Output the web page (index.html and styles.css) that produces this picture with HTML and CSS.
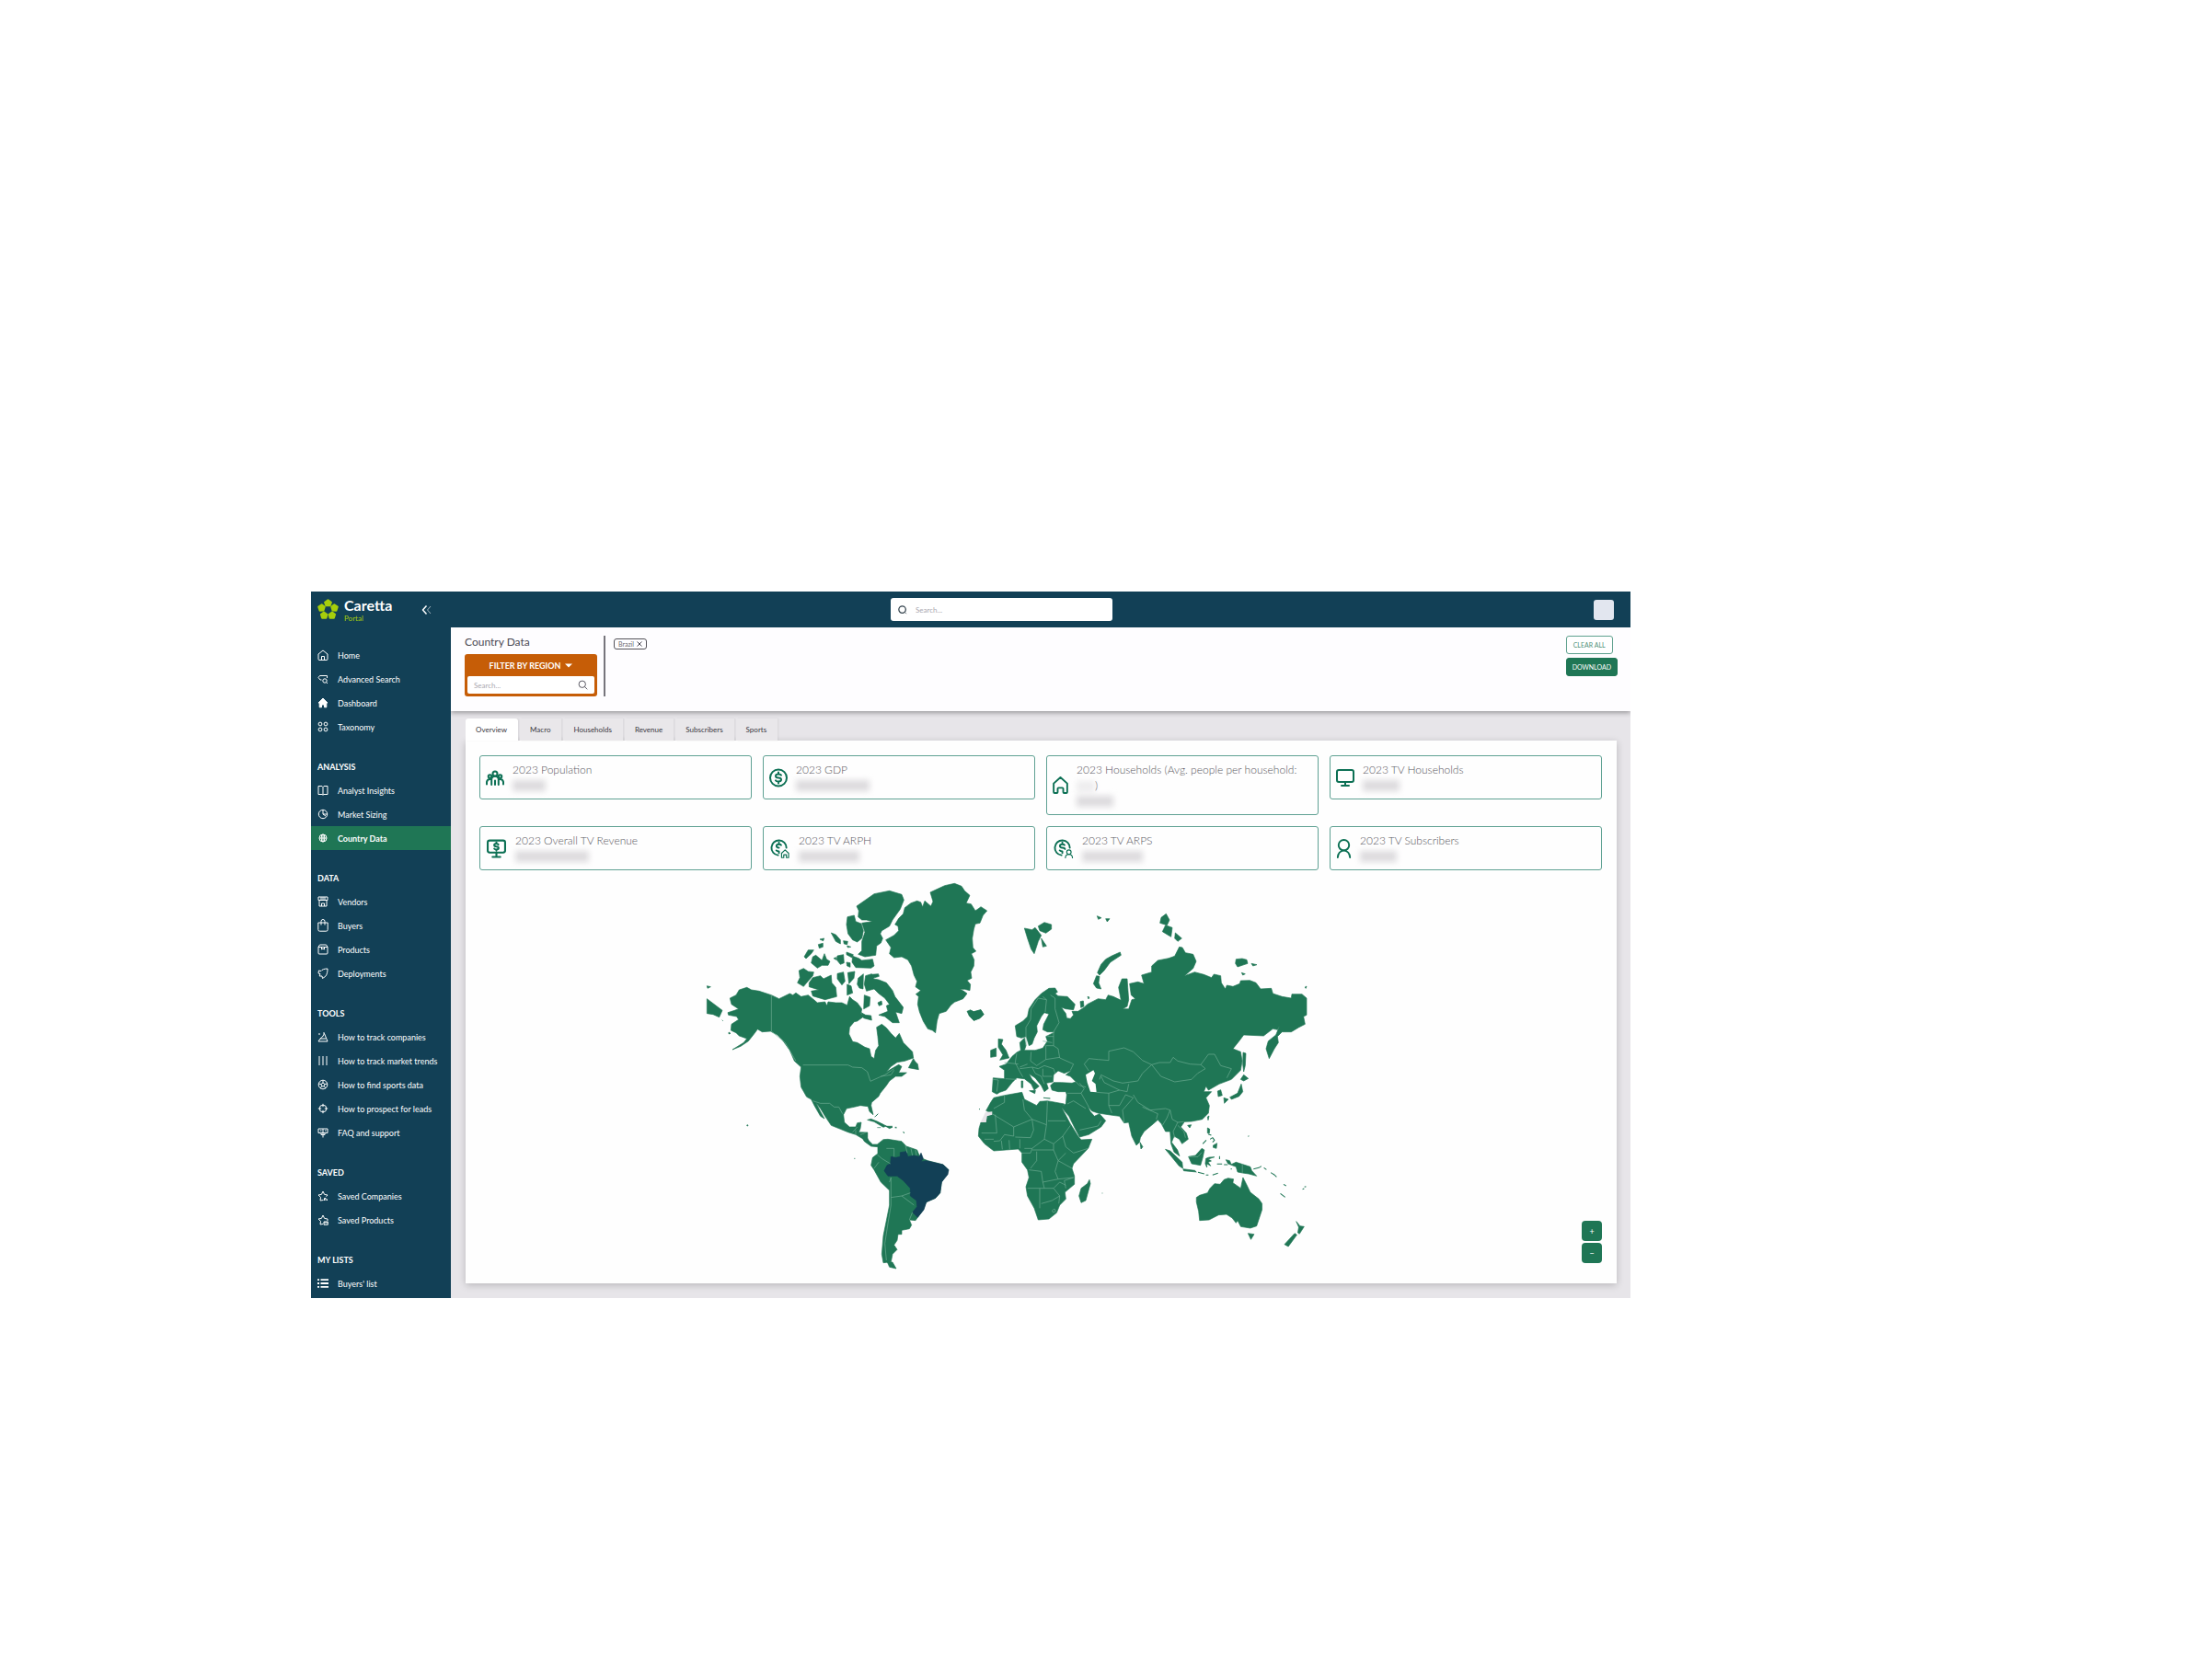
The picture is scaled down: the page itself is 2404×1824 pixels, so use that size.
FILE: index.html
```html
<!DOCTYPE html>
<html lang="en">
<head>
<meta charset="utf-8">
<title>Caretta Portal - Country Data</title>
<link rel="stylesheet" href="styles.css">
</head>
<body>
<svg class="sprite" aria-hidden="true">
  <symbol id="home" viewBox="0 0 12 12"><path d="M1 5 6 1l5 4v5.500a1 1 0 0 1-1 1H2a1 1 0 0 1-1-1zM4.500 11V7.500h3V11"/></symbol>
  <symbol id="adv" viewBox="0 0 12 12"><path d="M10.500 5V2.500h-8L1 4.500l2 2.500h1.500M11 11 9.600 9.600"/><circle cx="8" cy="8" r="2.200"/></symbol>
  <symbol id="dash" viewBox="0 0 12 12"><path fill="currentColor" d="m6 1 5 5H9.800v4.800H7.500V8h-3v2.800H2.200V6H1z"/></symbol>
  <symbol id="tax" viewBox="0 0 12 12"><circle cx="3" cy="3" r="1.900"/><circle cx="9" cy="3" r="1.900"/><circle cx="3" cy="9" r="1.900"/><circle cx="9" cy="9" r="1.900"/></symbol>
  <symbol id="book" viewBox="0 0 12 12"><path d="M1 1.500h4l1 1 1-1h4v9H7l-1 .7-1-.7H1zM6 2.500V11"/></symbol>
  <symbol id="pie" viewBox="0 0 12 12"><circle cx="6" cy="6" r="4.700"/><path d="M6 1.500V6h4.500M6 6l3 2"/></symbol>
  <symbol id="globe" viewBox="0 0 12 12"><circle cx="6" cy="6" r="4"/><ellipse cx="6" cy="6" rx="1.800" ry="4"/><path d="M2 6h8M6 2v8"/></symbol>
  <symbol id="shop" viewBox="0 0 12 12"><path d="M1 1h10v3.500H1zM2 5v6h8V5M4 1v3M8 1v3M6 1v3M4.500 11V8h3v3"/></symbol>
  <symbol id="bag" viewBox="0 0 12 14"><path d="M.8 4h10.400v7.500q0 1.700-1.700 1.700h-7q-1.700 0-1.700-1.700zM4 6.500v-4a2 2 0 0 1 4 0v4"/></symbol>
  <symbol id="box" viewBox="0 0 12 12"><path d="M1 3.500 2.500 1h7L11 3.500v6.500a1 1 0 0 1-1 1H2a1 1 0 0 1-1-1zM1 3.500h10M4.500 3.500V6L6 5.200 7.500 6V3.500"/></symbol>
  <symbol id="rocket" viewBox="0 0 12 12"><path d="M11 1C7 1 5 2 4 3.500L1.500 3 1 6l2 .5-.8 2.500L5 9l.5 2.500L8.500 9.500C10.500 7.500 11 4 11 1z"/></symbol>
  <symbol id="compass" viewBox="0 0 12 12"><path d="M1 11h10L7.500 2.500 5.500 6 3 8zM3 8h6M1 3h2M6 2h2"/></symbol>
  <symbol id="sliders" viewBox="0 0 12 12"><path d="M2 1v5M2 8v3M6 1v2M6 5v6M10 1v5M10 8v3M1 7h2M5 4h2M9 7h2"/></symbol>
  <symbol id="ball" viewBox="0 0 12 12"><circle cx="6" cy="6" r="4.800"/><path d="m6 4 2 1.500-.8 2.300H4.800L4 5.500zM6 4V1.500M8 5.500 10.500 5M7.200 7.800 9 10M4.800 7.800 3 10M4 5.500 1.500 5"/></symbol>
  <symbol id="target" viewBox="0 0 12 12"><circle cx="6" cy="6" r="3.800"/><path d="M6 .8v3.400M6 7.800v3.400M.8 6h3.400M7.800 6h3.400"/></symbol>
  <symbol id="sign" viewBox="0 0 12 12"><path d="M1 2h10v4.500H1zM6 2v9.500M4 7v1.500h4V7M3 4h1.500M8 4h1.500"/></symbol>
  <symbol id="starA" viewBox="0 0 12 12"><path d="M6.500 10.500 3 11l.5-3.500L1 5l3.400-.6L6 1l1.600 3.400L11 5 9.500 6.700M7.500 11V8.500h1.500V11M10.500 11V9.500"/></symbol>
  <symbol id="starB" viewBox="0 0 12 12"><path d="M6 10.500 3 11l.5-3.500L1 5l3.400-.6L6 1l1.600 3.400L11 5v2M7 8h4.300v3.300H7zM7 9h4"/></symbol>
  <symbol id="list" viewBox="0 0 12 12"><path stroke-width="1.800" d="M0 2.200h2M3.500 2.200H12M0 6h2M3.500 6H12M0 9.800h2M3.500 9.800H12"/></symbol>
  <symbol id="glass" viewBox="0 0 12 12"><circle cx="5.200" cy="5.200" r="4"/><path d="m8.200 8.200 3 3"/></symbol>
  <symbol id="ring" viewBox="0 0 12 12"><circle cx="5.500" cy="5.500" r="4.500"/><path stroke-width=".8" d="m9.500 9.500 1.500 1.500"/></symbol>
  <symbol id="people" viewBox="0 0 20 20"><circle cx="10" cy="5.500" r="2.500"/><circle cx="4.500" cy="8.500" r="1.800"/><circle cx="15.500" cy="8.500" r="1.800"/><path d="M6.200 17.500V12a3.800 3.800 0 0 1 7.600 0v5.500M1 17v-2.500q.5-3 3.500-3M19 17v-2.500q-.5-3-3.500-3M10 13v4.500"/></symbol>
  <symbol id="dollar" viewBox="0 0 20 20"><circle cx="10" cy="10" r="9"/><path d="M13 7.200Q12.500 6 10 6q-3 0-3 2t3 2 3 2-3 2q-2.500 0-3-1.200M10 4v2M10 14v2"/></symbol>
  <symbol id="house" viewBox="0 0 18 20"><path d="m9 1 7.800 7v10q0 1-1 1h-2.600q-1 0-1-1v-4q0-1-1-1H6.800q-1 0-1 1v4q0 1-1 1H2.200q-1 0-1-1V8z"/></symbol>
  <symbol id="tv" viewBox="0 0 20 20"><rect x="1" y="1.500" width="18" height="13" rx="2"/><path d="M10 14.500v4M6 18.500h8"/></symbol>
  <symbol id="tvmoney" viewBox="0 0 20 20"><rect x="1" y="1.500" width="18" height="12.500" rx="2"/><path d="M10 14v4.500M6 18.500h8M12 5.800q-.5-1-2-1-2.200 0-2.200 1.500T10 7.800t2.200 1.500T10 11q-1.500 0-2.200-1M10 3.500v1.200M10 11v1"/></symbol>
  <symbol id="moneyhouse" viewBox="0 0 22 22"><path d="M9 18.500a8.500 8.500 0 1 1 9.500-8.500M12.500 7q-.5-1-2.500-1-2.800 0-2.800 1.900T10 10M10 4v2M7 13q1 1 3 1v2"/><path stroke-width="1.200" d="m17 12.500 4 3.700v5h-2.500V18h-3v3.200H13v-5z"/></symbol>
  <symbol id="moneyuser" viewBox="0 0 22 22"><path d="M9 18.500a8.500 8.500 0 1 1 9.500-8.500M12.500 7q-.5-1-2.500-1-2.800 0-2.800 1.900T10 10t3 1.500M10 4v2M7 13q1 1 3 1v2"/><g stroke-width="1.200"><circle cx="17.500" cy="15" r="2.500"/><path d="M13.500 21.500q0-4 4-4t4 4"/></g></symbol>
  <symbol id="user" viewBox="0 0 17 22"><ellipse cx="8.500" cy="7" rx="6" ry="6"/><path d="M1.500 21q.5-7 7-8 6.500 1 7 8"/></symbol>
  <symbol id="chev" viewBox="0 0 12 12"><path stroke-width="1.500" d="M5.500 1.500 1.500 6l4 4.500"/><path opacity=".6" d="M10 2 6.500 6l3.500 4"/></symbol>
</svg>

<div class="app">
  <header class="topbar">
    <div class="brand">
      <svg class="logo" viewBox="0 0 22 22" aria-hidden="true">
        <g fill="#a6ce0b" stroke="#a6ce0b" stroke-width="2" stroke-linejoin="round">
          <path id="petal" d="m11 1.200 3.200 2.400L13 7H9L7.800 3.600z"/>
          <use href="#petal" transform="rotate(72 11 11.500)"/>
          <use href="#petal" transform="rotate(144 11 11.500)"/>
          <use href="#petal" transform="rotate(216 11 11.500)"/>
          <use href="#petal" transform="rotate(288 11 11.500)"/>
        </g>
      </svg>
      <div class="brand-text"><span class="brand-name">Caretta</span><span class="brand-sub">Portal</span></div>
      <button class="collapse" type="button" aria-label="Collapse menu"><svg class="icon"><use href="#chev"/></svg></button>
    </div>
    <label class="search"><svg class="icon"><use href="#ring"/></svg><input type="text" placeholder="Search..." aria-label="Search"></label>
    <button class="avatar" type="button" aria-label="Account"></button>
  </header>

  <nav class="sidebar">
    <ul>
      <li><a href="#"><svg class="icon"><use href="#home"/></svg>Home</a></li>
      <li><a href="#"><svg class="icon"><use href="#adv"/></svg>Advanced Search</a></li>
      <li><a href="#"><svg class="icon"><use href="#dash"/></svg>Dashboard</a></li>
      <li><a href="#"><svg class="icon"><use href="#tax"/></svg>Taxonomy</a></li>
    </ul>
    <h2>ANALYSIS</h2>
    <ul>
      <li><a href="#"><svg class="icon"><use href="#book"/></svg>Analyst Insights</a></li>
      <li><a href="#"><svg class="icon"><use href="#pie"/></svg>Market Sizing</a></li>
      <li><a href="#" class="active"><svg class="icon"><use href="#globe"/></svg>Country Data</a></li>
    </ul>
    <h2>DATA</h2>
    <ul>
      <li><a href="#"><svg class="icon"><use href="#shop"/></svg>Vendors</a></li>
      <li><a href="#"><svg class="icon tall"><use href="#bag"/></svg>Buyers</a></li>
      <li><a href="#"><svg class="icon"><use href="#box"/></svg>Products</a></li>
      <li><a href="#"><svg class="icon"><use href="#rocket"/></svg>Deployments</a></li>
    </ul>
    <h2>TOOLS</h2>
    <ul>
      <li><a href="#"><svg class="icon"><use href="#compass"/></svg>How to track companies</a></li>
      <li><a href="#"><svg class="icon"><use href="#sliders"/></svg>How to track market trends</a></li>
      <li><a href="#"><svg class="icon"><use href="#ball"/></svg>How to find sports data</a></li>
      <li><a href="#"><svg class="icon"><use href="#target"/></svg>How to prospect for leads</a></li>
      <li><a href="#"><svg class="icon"><use href="#sign"/></svg>FAQ and support</a></li>
    </ul>
    <h2>SAVED</h2>
    <ul>
      <li><a href="#"><svg class="icon"><use href="#starA"/></svg>Saved Companies</a></li>
      <li><a href="#"><svg class="icon"><use href="#starB"/></svg>Saved Products</a></li>
    </ul>
    <h2>MY LISTS</h2>
    <ul>
      <li><a href="#"><svg class="icon"><use href="#list"/></svg>Buyers' list</a></li>
    </ul>
  </nav>

  <main class="main">
    <section class="filters">
      <div class="filter-col">
        <h1>Country Data</h1>
        <div class="region">
          <button class="region-btn" type="button">FILTER BY REGION<svg class="caret" viewBox="0 0 8 5"><path d="M0 .5h8L4 4.500z" fill="#fff"/></svg></button>
          <label class="region-search"><input type="text" placeholder="Search..." aria-label="Search regions"><svg class="icon"><use href="#glass"/></svg></label>
        </div>
      </div>
      <div class="tags"><button class="tag" type="button">Brazil<svg class="x" viewBox="0 0 6 6"><path d="m.5.5 5 5m0-5-5 5"/></svg></button></div>
      <div class="actions">
        <button class="btn outline" type="button">CLEAR ALL</button>
        <button class="btn solid" type="button">DOWNLOAD</button>
      </div>
    </section>

    <div class="content">
      <div class="tabs" role="tablist">
        <button role="tab" class="tab on" type="button">Overview</button>
        <button role="tab" class="tab" type="button">Macro</button>
        <button role="tab" class="tab" type="button">Households</button>
        <button role="tab" class="tab" type="button">Revenue</button>
        <button role="tab" class="tab" type="button">Subscribers</button>
        <button role="tab" class="tab" type="button">Sports</button>
      </div>
      <section class="panel">
        <div class="cards">
          <article class="card"><svg class="ci"><use href="#people"/></svg><div><h3>2023 Population</h3><span class="blob w36"></span></div></article>
          <article class="card"><svg class="ci"><use href="#dollar"/></svg><div><h3>2023 GDP</h3><span class="blob w80"></span></div></article>
          <article class="card"><svg class="ci narrow"><use href="#house"/></svg><div><h3>2023 Households (Avg. people per household: <span class="blob inline w20"></span>)</h3><span class="blob w40"></span></div></article>
          <article class="card"><svg class="ci"><use href="#tv"/></svg><div><h3>2023 TV Households</h3><span class="blob w40"></span></div></article>
          <article class="card"><svg class="ci wide"><use href="#tvmoney"/></svg><div><h3>2023 Overall TV Revenue</h3><span class="blob w80"></span></div></article>
          <article class="card"><svg class="ci wide"><use href="#moneyhouse"/></svg><div><h3>2023 TV ARPH</h3><span class="blob w66"></span></div></article>
          <article class="card"><svg class="ci wide"><use href="#moneyuser"/></svg><div><h3>2023 TV ARPS</h3><span class="blob w66"></span></div></article>
          <article class="card"><svg class="ci narrow"><use href="#user"/></svg><div><h3>2023 TV Subscribers</h3><span class="blob w40"></span></div></article>
        </div>
        <div class="map">
          <svg class="world" viewBox="521 946 1220 434" role="img" aria-label="World map with Brazil selected">
            <!-- North America and Greenland -->
            <g class="land" transform="translate(750 940) scale(.33333)">
              <path d="M783 90 800 82 830 68 862 61 885 70 895 85 912 100 900 125 916 128 930 150 942 142 948 137 968 150 955 165 945 190 930 193 925 210 920 240 922 270 932 282 917 290 926 310 925 330 915 350 918 370 903 377 914 390 912 410 895 406 880 406 892 412 903 420 890 437 862 448 850 458 835 478 812 485 805 510 800 548 790 540 775 535 760 510 748 480 742 455 745 430 736 422 752 410 735 398 740 380 730 360 722 330 710 310 690 300 665 303 650 290 655 270 638 245 665 230 680 215 678 200 668 195 680 175 695 160 700 140 720 125 740 118 752 122 758 138 765 118 785 135 792 120Z"/>
              <path d="M543 135 600 95 650 85 690 97 697 115 685 145 660 180 650 200 625 215 620 225 628 240 622 255 608 265 605 295 570 300 548 292 560 280 560 250 570 220 560 190 595 185 575 180 560 180 548 170 550 150Z"/>
              <path d="M513 170 535 165 540 185 558 192 565 215 560 240 545 252 530 245 515 225 510 195Z"/>
              <path d="M530 298 550 305 560 312 595 308 600 330 590 337 540 335 528 318Z"/>
              <path d="M388 385 400 368 425 362 435 372 460 360 462 385 475 400 478 430 440 440 400 428 395 412 420 408 388 398Z"/>
              <path d="M355 345 370 338 385 348 403 350 400 362 380 385 370 397 350 385 358 368Z"/>
              <path d="M372 300 385 278 403 278 395 290 378 306ZM400 300 410 295 430 312 438 290 445 308 456 315 450 328 430 328 415 337 395 320ZM480 297 500 293 502 320 490 325 478 310Z"/>
              <path d="M460 222 475 228 490 245 490 258 475 250ZM423 243l14-3-3 8ZM418 260l15-4 0 12-12 4ZM500 248l14 2-2 10-10-2ZM512 264l12 4-10 2ZM510 285l22 8-4 10-18-10ZM510 318l12 2 0 14-10-4ZM468 305l8-3 0 8Z"/>
              <path d="M480 355 500 350 505 380 495 392 480 372ZM514 352 537 348 534 370 518 388ZM512 390 525 395 530 418 512 425ZM548 370 565 356 564 405 552 402 545 390Z"/>
              <path d="M572 362 592 356 598 372 615 375 640 385 660 410 668 430 695 465 690 485 670 480 682 515 660 515 635 495 615 490 645 478 640 460 650 455 635 435 615 420 600 405 575 412 568 390Z"/>
              <path d="M568 425 587 432 585 460 566 470ZM558 482 572 490 590 492 592 507 566 500ZM612 450l12-6 2 12-10 4ZM590 358l24-2 2 8-20 6Z"/>
              <path d="M130 435 150 425 160 408 185 400 200 408 225 412 265 425 290 437 325 420 335 425 345 418 362 430 385 425 400 437 415 450 440 447 446 460 450 447 475 450 495 450 512 458 520 430 530 440 545 450 560 470 557 485 566 495 545 510 535 512 520 530 518 552 530 577 545 580 570 595 585 600 590 625 600 632 605 605 615 590 612 560 608 530 625 520 640 532 655 550 670 565 682 550 695 580 725 610 728 630 700 640 675 644 655 658 640 675 680 652 690 658 680 678 706 678 690 690 670 690 650 705 640 720 620 745 615 755 592 775 590 785 597 815 585 805 580 788 555 785 535 790 510 795 500 815 503 840 520 855 540 855 545 842 558 840 555 860 550 872 578 873 578 890 582 900 560 892 540 880 515 872 490 862 460 850 440 820 425 795 410 775 425 805 438 828 425 820 405 785 395 765 380 757 362 725 358 690 362 660 340 640 325 605 300 570 285 555 262 543 235 545 220 536 210 550 190 575 165 592 138 603 175 580 185 567 160 558 150 548 133 540 135 520 158 505 152 495 125 490 123 482 145 475 158 470 135 455Z"/>
              <path d="M728 632 734 642 742 650 745 668 712 662ZM55 437 105 475 95 497 75 488 55 485ZM55 395l12 3-10 5Z"/>
              <path d="M578 832 590 829 610 837 640 852 630 856 600 838ZM638 853 660 856 650 860ZM610 857h12M668 858h6M903 478 915 473 920 480 948 473 957 488 945 500 925 508 910 492ZM126 546l6 4-6 2ZM104 506l4 4"/>
              <circle cx="187" cy="850" r="2"/>
              <path class="b" d="M368 653H515L530 660 560 662 578 675 588 706 635 685 655 672 665 665M265 425V543L310 580 345 640M400 770 425 778 455 778 470 790 485 790 497 812M622 690 655 685 665 670M530 872 545 855M555 880 572 875"/>
            </g>
            <!-- Europe and Asia -->
            <g class="land" transform="translate(1050 940) scale(.33333)">
              <path d="M160 525 185 510 200 495 205 470 225 440 245 420 270 403 290 402 298 415 290 420 300 428 330 430 355 455 350 473 325 470 310 465 325 485 328 500 340 502 350 490 345 478 365 478 385 465 395 455 430 437 455 440 463 425 480 430 505 442 497 400 508 372 525 372 527 400 530 440 525 462 510 470 530 470 540 440 552 437 538 425 533 388 560 382 580 388 572 360 605 350 605 330 625 312 660 305 680 298 695 268 705 270 715 287 740 292 750 315 740 338 712 362 745 350 775 358 800 368 808 357 830 362 832 385 845 405 850 393 870 397 892 388 895 378 925 377 945 385 960 405 995 403 1000 420 1030 430 1060 435 1062 422 1095 422 1110 435V490L1100 495 1105 520 1085 530 1060 545 1030 545 1015 560 1018 580 1005 600 988 632 978 600 985 575 1010 555 1022 525 1015 538 1000 535 970 558 905 555 890 575 870 600 895 610 900 640 895 670 865 700 825 715 790 735 782 722 775 740 800 740 782 760 793 785 790 810 770 830 735 837 712 838 700 855 718 875 724 895 704 910 695 895 678 885 670 905 689 930 696 950 678 937 668 910 665 870 650 870 637 845 625 832 610 845 580 870 568 890 565 905 555 915 540 885 530 840 515 842 500 820 470 816 430 810 410 803 396 787 405 805 418 820 435 812 455 835 440 855 400 880 370 888 355 860 335 820 310 790 325 780 328 750 325 740 300 740 280 735 275 720 285 710 310 710 345 712 358 708 340 690 325 685 345 670 320 680 300 672 285 685 283 708 262 712 268 730 255 740 245 720 225 695 205 682 215 700 238 722 222 735 212 715 190 698 165 695 150 710 130 735 110 742 100 748 85 740 88 695 125 698 125 670 108 658 130 650 150 625 165 612 178 605 175 580 190 565 195 590 190 605 225 605 250 598 265 575 260 560 290 545 265 545 250 538 253 520 270 487 255 482 245 495 230 525 232 545 222 565 215 585 205 590 196 560 180 565 165 560Z"/>
              <path d="M105 568 120 570 115 585 130 605 140 630 110 637 120 620 105 595ZM80 605 98 598 98 625 80 628ZM8 480 18 475 25 480 48 473 57 488 45 500 25 508 10 492Z"/>
              <path d="M190 207 215 212 225 205 245 230 235 250 222 290 212 275 200 240ZM235 200 255 188 278 195 278 210 260 223 240 215ZM245 240 262 265 250 268ZM427 167l14 6-10 5ZM455 176l13 0-8 10Z"/>
              <path d="M502 285 505 295 470 318 450 345 435 360 428 352 440 325 455 308 475 297ZM425 362 435 364 432 385 440 405 425 402 415 388ZM372 446l10-2 2 18-10 4ZM396 430l6 2-3 6Z"/>
              <path d="M636 172 652 160 663 180 655 197 632 190ZM650 197 672 205 668 235 640 218ZM682 222 703 240 690 250 680 240ZM880 308 900 306 915 310 918 322 885 333 878 322ZM930 322 948 326 935 330ZM898 352l12 4-8 4ZM1104 400l6-4-2 7Z"/>
              <path d="M903 612 912 615 910 655 905 675 902 650ZM905 685 920 697 905 705 895 700ZM897 715 902 740 890 755 865 765 860 758 885 745ZM840 760 855 765 842 778ZM820 738 830 734 835 752 822 756ZM787 822l5-3-3 14ZM722 850l12-2-5 10ZM206 737l20-1-2 10ZM180 705h5l0 22-5 0ZM252 760l22 2ZM567 905 576 920 570 927Z"/>
              <path class="sea" d="M415 670 390 685 395 710 405 740 425 742 422 715 410 705 420 680Z"/>
              <path class="b" d="M195 590 195 530 210 505 212 470 235 435 262 440 258 480M262 440 250 430M275 425 290 435 290 470 303 515 285 545 285 590 300 600 305 630 350 650 340 670M260 635 260 590 285 590M260 635 305 628M212 610 210 640 230 655 260 635M165 615 160 645 175 675 185 692M200 650 175 660M175 665 215 660 235 665 255 655 285 665 290 680M215 660 225 680 245 690 255 715M250 665 250 690 280 690M88 700 105 702 100 740M128 698 165 700M125 645 170 650M250 575 280 580M265 560 285 560"/>
              <path class="b" d="M400 672 385 650 400 632 430 635 465 638 465 608 515 597 545 610 575 638 605 652 575 680 560 705 510 712 480 705 440 685 435 700M605 652 630 645 665 645 675 628 690 640 730 650 765 652 780 665 755 680 735 700 680 708 635 690 605 652M765 652 790 618 810 618 830 655 865 665 850 695M425 742 465 745 500 735 525 740 530 715M440 690 450 710 500 735M465 745 465 785 475 810M465 785 500 785 520 750 545 760 510 800 515 840M545 750 560 775 600 800 650 795 665 800 655 825 640 850M575 790 625 812 620 830M370 712 385 730 375 745 400 790M330 745 375 745M330 780 350 770 390 795M370 865 430 852 440 835M665 800 672 830 690 840 710 838M690 840 675 870 680 890M690 850 710 870 715 890M358 708 370 720 390 725"/>
            </g>
            <!-- Africa and South America -->
            <g class="land" transform="translate(900 1170) scale(.33333)">
              <path d="M575 62 632 52 640 75 680 95 690 82 715 80 770 90 762 103 790 155 815 195 825 207 860 205 848 235 800 285 795 300 803 325 803 352 772 378 775 400 755 420 745 445 720 465 685 468 672 430 650 390 645 360 655 330 650 305 632 280 632 250 620 237 580 240 540 243 510 220 490 195 492 170 498 150 515 150 518 130 535 122 515 112 530 85 540 70ZM852 337 855 350 840 405 825 412 818 390 825 365 845 350Z"/>
              <path class="gray" d="M513 117 535 115 535 125 518 130 515 150 497 150Z"/>
              <path d="M128 183 128 205 145 222 160 222 180 206 195 205 240 212 255 228 290 240 300 265 325 275 375 288 393 305 370 345 365 380 350 397 320 410 310 435 292 460 285 470 265 468 272 485 265 497 240 502 240 515 228 515 225 535 215 550 225 565 210 580 205 605 180 608 175 580 180 520 190 470 200 420 200 372 172 345 150 305 140 290 145 265 162 252 162 230 140 228 118 212 108 195ZM193 606 210 606 222 627 200 622Z"/>
              <path class="sel" d="M205 262 220 265 235 262 235 248 255 245 260 262 280 258 297 262 303 250 310 268 303 278 320 275 375 288 393 305 390 320 370 345 365 380 350 397 320 410 312 435 292 460 275 443 290 425 288 405 268 390 268 365 245 340 225 325 195 325 183 308 192 290 203 285Z"/>
              <path class="b" d="M575 62 575 85 540 105M535 122 605 165 665 140 640 110 635 75M545 125 550 185 500 185M605 165 605 195 575 190 560 210 540 212M665 140 712 158 715 82M717 145H775M665 140 670 175 660 200 610 198M712 158 705 205 735 220 765 195 790 160M765 195 775 230 800 250 848 235M705 205 665 235 640 235M632 250 660 250 665 235M665 240 735 240 750 275 740 310 750 335 700 345 695 310 655 305M680 245 680 275 660 300M750 275 795 300M735 220 735 240M750 275 775 250M750 335 800 330M700 345 705 365 650 365M705 365 735 365 755 345 775 355M690 365 690 430M695 415 730 405 755 390M735 365 755 390 752 415M565 210 568 238M590 208 592 238M625 205 625 235M510 205 540 205M730 438 738 432 742 440 734 444ZM160 255 175 268 203 285M150 300 165 280M205 330 205 420 195 480 185 545 190 600M205 330 200 345M205 395 240 390 268 380M240 390 280 420M265 468 275 443M190 235 215 235 215 262M252 225 258 250M270 235 275 258M285 240 288 258M90 190 90 175M800 330 770 340 775 365"/>
              <path class="dot" d="M135 142 150 145 180 158M190 163h20M218 166h5M85 268h3M152 132l3-2 8-8M245 180l3 6M893 381h2M492 107h3"/>
            </g>
            <!-- South-East Asia and Oceania -->
            <g class="land" transform="translate(1240 1170) scale(.34436 .33333)">
              <path d="M175 395 185 388 210 380 218 365 232 350 250 352 262 337 275 332 292 335 290 347 315 365 322 330 332 350 345 378 372 400 382 415 382 435 365 488 345 495 315 490 305 470 300 478 288 462 270 450 245 452 215 468 185 470 182 440 175 410ZM338 512 357 515 347 532ZM490 473 502 488 515 490 500 514 495 510 498 492ZM485 512 492 517 465 555 453 548Z"/>
              <path d="M77 238 92 243 130 280 132 300 120 292 95 260ZM133 302 170 307 175 312 135 308ZM150 262 172 258 192 235 200 240 195 265 188 290 160 285ZM205 268 215 264 232 263 212 270 222 276 212 280 220 292 208 285 208 297 203 285ZM268 272 280 275 285 287 300 280 345 295 350 308 365 325 340 318 320 315 305 312 300 295 275 285ZM210 168 217 172 216 185 210 185ZM228 225 240 218 238 235 228 232Z"/>
              <path class="b" d="M320 285V315M152 262 180 262 192 248"/>
              <path class="dot" d="M180 313 200 318M205 322h8M226 322 243 316M195 220 206 208M212 188 222 192M218 205 226 200 232 208 226 215M248 260v10M240 286h16M262 288h12M285 300v4M355 302 372 298 380 293M388 298l8 6M410 314l12 8M418 318l10 10M450 352l8 5M440 382l15 12M510 368l5-2M516 361l5-2M338 196l3-2"/>
            </g>
          </svg>
          <div class="zoom">
            <button type="button" aria-label="Zoom in">+</button>
            <button type="button" aria-label="Zoom out">−</button>
          </div>
        </div>
      </section>
    </div>
  </main>
</div>
</body>
</html>
```
FILE: styles.css
```css
* { box-sizing: border-box; }

body {
  margin: 0;
  padding: 643px 632px 0 338px;
  background: #fff;
  font-family: Lato, "Open Sans", sans-serif;
  color: #4b4a55;
}

button, input { font: inherit; margin: 0; }
button { border: 0; padding: 0; background: none; cursor: pointer; }
h1, h2, h3, ul { margin: 0; padding: 0; font-weight: 400; }
ul { list-style: none; }

.sprite { display: none; }
.icon {
  width: 12px;
  height: 12px;
  flex: none;
  fill: none;
  stroke: currentColor;
  stroke-width: 1;
  stroke-linejoin: round;
}
.icon.tall { height: 14px; }

.app {
  display: grid;
  grid-template-columns: 152px 1fr;
  grid-template-rows: 39px auto;
  background: #e7e5e9;
}

/* Top bar */
.topbar {
  grid-column: 1 / -1;
  display: grid;
  grid-template-columns: 152px 1fr 85px;
  align-items: center;
  background: #124056;
}
.brand { display: flex; align-items: center; padding: 0 20px 0 7px; }
.logo { width: 23px; height: 23px; }
.brand-text { display: flex; flex-direction: column; margin-left: 6px; color: #fff; }
.brand-name { font-size: 16px; line-height: 19px; font-weight: 700; }
.brand-sub { font-size: 8px; line-height: 10px; color: #a6ce0b; }
.collapse { display: flex; margin-left: auto; color: #fff; }
.search {
  justify-self: center;
  display: flex;
  align-items: center;
  gap: 9px;
  width: 241px;
  height: 25px;
  padding: 0 8px;
  border-radius: 3px;
  background: #fff;
  color: #33424c;
}
.search .icon { width: 10px; height: 10px; stroke-width: 1.5; }
input {
  flex: 1;
  min-width: 0;
  border: 0;
  padding: 0;
  background: none;
  outline: none;
  font-size: 8px;
}
input::placeholder { color: #aaa8b0; opacity: 1; }
.avatar { width: 22px; height: 22px; margin-left: 45px; border-radius: 3px; background: #e2e6ef; }

/* Sidebar */
.sidebar { background: #124056; color: #fff; padding: 17px 0 3px; }
.sidebar a {
  display: flex;
  align-items: center;
  gap: 10px;
  height: 26px;
  padding-left: 7px;
  color: #fff;
  font-size: 9px;
  text-decoration: none;
  white-space: nowrap;
}
.sidebar a.active { background: #1f7655; font-weight: 700; }
.sidebar h2 { margin-top: 19px; padding-left: 7px; font-size: 9px; line-height: 24px; font-weight: 700; }

/* Filter header */
.main { display: flex; flex-direction: column; min-width: 0; }
.filters {
  display: flex;
  height: 91px;
  padding: 9px 14px 16px 15px;
  background: #fefdff;
  box-shadow: 0 2px 5px #0005;
  clip-path: inset(0 0 -8px 0);
}
.filter-col { padding-right: 7px; border-right: 2px solid #77757c; }
h1 { font-size: 12px; line-height: 14px; margin-bottom: 6px; color: #4b4a55; }
.region { width: 144px; padding: 0 3px 3px; border-radius: 3px; background: #c65d07; }
.region-btn {
  display: flex;
  align-items: center;
  justify-content: center;
  gap: 5px;
  width: 100%;
  height: 24px;
  color: #fff;
  font-size: 9px;
  font-weight: 700;
}
.caret { width: 8px; height: 5px; }
.region-search {
  display: flex;
  align-items: center;
  height: 19px;
  padding: 0 7px;
  border-radius: 2px;
  background: #fff;
}
.region-search .icon { width: 11px; height: 11px; }
.tags { flex: 1; padding: 3px 9px; }
.tag {
  display: flex;
  align-items: center;
  gap: 3px;
  height: 12px;
  padding: 0 4px;
  border: 1px solid #55535a;
  border-radius: 3px;
  color: #6b6971;
  font-size: 7px;
  line-height: 8px;
}
.x { width: 6px; height: 6px; stroke: #4b4a55; }
.actions { display: flex; flex-direction: column; align-items: flex-start; gap: 4px; }
.btn { height: 20px; padding: 0 6px; border: 1px solid #1f7655; border-radius: 3px; font-size: 7px; }
.outline { padding: 0 7px; color: #4f9179; border-color: #5fa18f; background: #fff; }
.solid { color: #fff; background: #1f7655; }

/* Tabs and panel */
.content { padding: 8px 15px 16px 16px; }
.tabs { display: flex; gap: 2px; }
.tab {
  height: 24px;
  padding: 0 12px 0 11px;
  color: #3a3842;
  font-size: 8px;
  background: #e9e7ea;
  box-shadow: 1px 0 2px #0001;
}
.tab.on { background: #fff; border-radius: 3px 3px 0 0; }
.panel {
  padding: 16px 16px 15px 15px;
  background: #fefefe;
  box-shadow: 0 2px 8px #0003;
}
.cards { display: grid; grid-template-columns: repeat(4, 1fr); gap: 12px; align-items: start; }
.card {
  display: flex;
  align-items: center;
  gap: 9px;
  padding: 6px;
  border: 1px solid #5fa193;
  border-radius: 3px;
}
.ci { flex: none; width: 20px; height: 21px; fill: none; stroke: #0c7054; stroke-width: 2; stroke-linecap: round; stroke-linejoin: round; }
.ci.narrow { width: 17px; }
.ci.wide { width: 23px; }
h3 { font-size: 12px; line-height: 17px; font-weight: 300; color: #5b5962; }
.blob { display: block; height: 12px; margin: 3px 0 2px; background: #dddbde; filter: blur(3px); }
.blob.inline { display: inline-block; margin: 0; vertical-align: middle; opacity: .5; }
.w20 { width: 20px; }
.w36 { width: 36px; }
.w40 { width: 40px; }
.w66 { width: 66px; }
.w80 { width: 80px; }

/* Map */
.map { position: relative; }
.world { display: block; width: 100%; height: auto; }
.land { fill: #1f7655; stroke: #1f7655; stroke-width: 2; stroke-linejoin: round; }
.b { fill: none; stroke: #6fae94; stroke-width: 2; }
.sea { fill: #fefefe; stroke: none; }
.gray { fill: #e6e4e8; stroke: none; }
.sel { fill: #124056; stroke: #124056; }
.dot { fill: none; stroke-width: 3; }
.zoom { position: absolute; right: 0; bottom: 7px; display: grid; gap: 2px; }
.zoom button { width: 22px; height: 22px; border-radius: 4px; background: #1f7655; color: #fff; font-size: 9px; }
```
